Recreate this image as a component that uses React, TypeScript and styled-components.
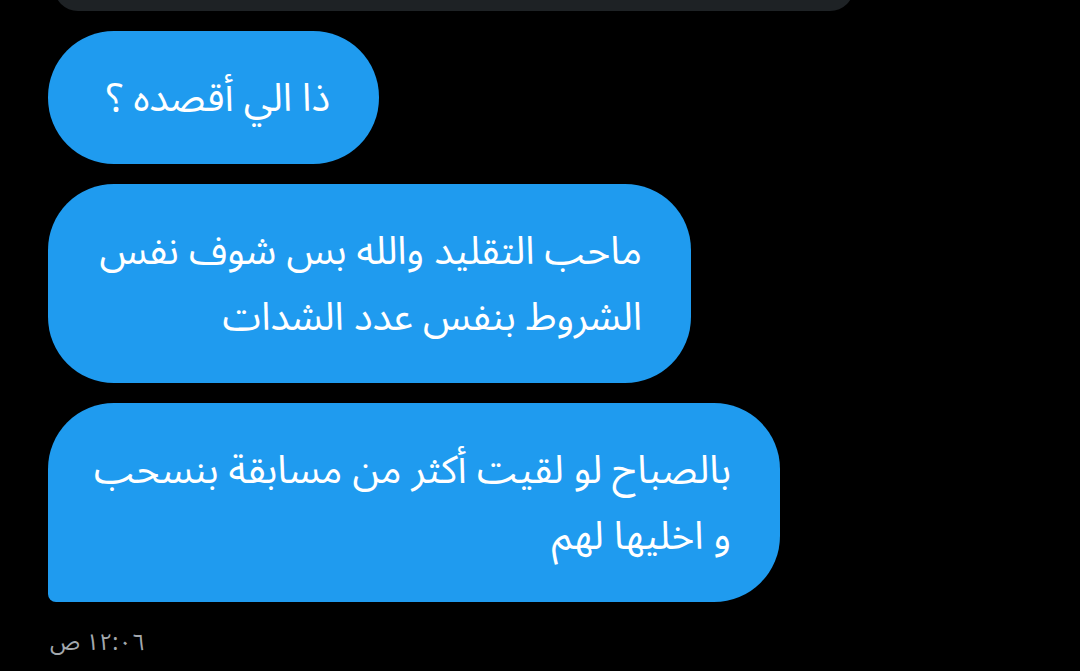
import React from "react";
import styled, { createGlobalStyle } from "styled-components";

const Global = createGlobalStyle`
  html, body {
    margin: 0;
    padding: 0;
    background: #000;
    overflow: hidden;
  }
  body {
    font-family: "Noto Sans Arabic", "DejaVu Sans", "Noto Sans", sans-serif;
  }
`;

const Thread = styled.div`
  display: flex;
  flex-direction: column;
  align-items: flex-start;
  gap: 20px;
  padding-left: 48px;
  width: 1080px;
  height: 671px;
  box-sizing: border-box;
  overflow: hidden;
`;

const Incoming = styled.div`
  margin-top: -49px;
  margin-left: 6px;
  width: 800px;
  height: 60px;
  background: #1e2225;
  border-radius: 0 0 24px 24px;
`;

const Bubble = styled.div<{ $w: number; $tail?: boolean }>`
  display: flex;
  flex-direction: column;
  width: ${(p) => p.$w}px;
  box-sizing: border-box;
  padding: 35px 49px 32px 40px;
  background: #1f9bef;
  color: #fff;
  direction: rtl;
  border-radius: ${(p) => (p.$tail ? "66px 66px 66px 8px" : "66px")};
`;

const Line = styled.span`
  display: block;
  height: 66px;
  font-size: 39px;
  line-height: 66px;
  white-space: nowrap;
  text-align: right;
`;

const Stamp = styled.div`
  margin-top: 6px;
  margin-left: 2px;
  direction: rtl;
  color: #a3a8ad;
  font-size: 23px;
  line-height: 30px;
`;

const messages: string[][] = [
  ["ذا الي أقصده ؟"],
  ["ماحب التقليد والله بس شوف نفس", "الشروط بنفس عدد الشدات"],
  ["بالصباح لو لقيت أكثر من مسابقة بنسحب", "و اخليها لهم"],
];

const widths = [331, 643, 732];

export default function App() {
  return (
    <>
      <Global />
      <Thread>
        <Incoming />
        {messages.map((lines, i) => (
          <Bubble key={i} $w={widths[i]} $tail={i === messages.length - 1}>
            {lines.map((l, j) => (
              <Line key={j}>{l}</Line>
            ))}
          </Bubble>
        ))}
        <Stamp>١٢:٠٦ ص</Stamp>
      </Thread>
    </>
  );
}
